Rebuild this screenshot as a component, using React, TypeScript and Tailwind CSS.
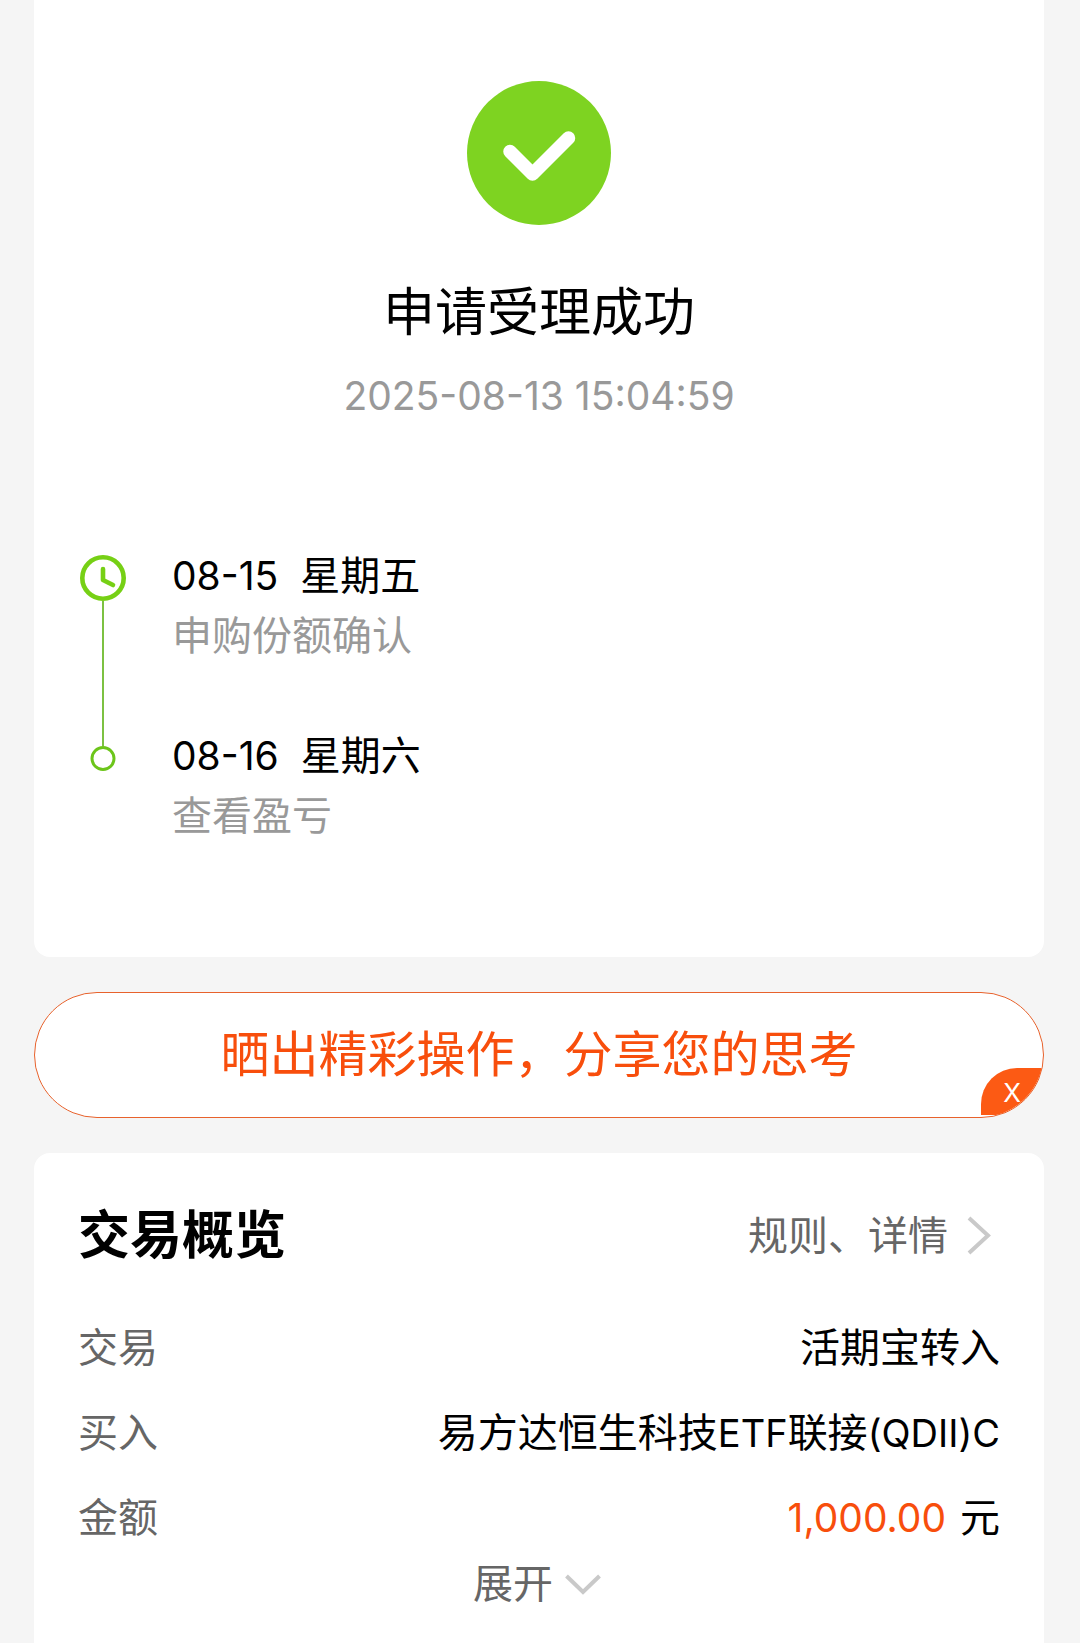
import React from 'react';

const steps = [
  { date: '08-15', weekday: '星期五', label: '申购份额确认' },
  { date: '08-16', weekday: '星期六', label: '查看盈亏' }
];

function SuccessIcon() {
  return (
    <svg className="h-36 w-36" viewBox="0 0 144 144" fill="none" aria-hidden="true">
      <circle cx="72" cy="72" r="72" fill="#7ed321" />
      <path
        d="M43 70.5 65.5 93 101.5 57"
        stroke="#fff"
        strokeWidth="13.5"
        strokeLinecap="round"
        strokeLinejoin="round"
      />
    </svg>
  );
}

function ClockIcon() {
  return (
    <svg className="h-[46px] w-[46px] shrink-0" viewBox="0 0 46 46" fill="none" stroke="#76d015" aria-hidden="true">
      <circle cx="23" cy="23" r="20.7" strokeWidth="4.6" />
      <path d="M23 14V25L33 30" strokeWidth="4.6" strokeLinecap="round" strokeLinejoin="round" />
    </svg>
  );
}

function DotIcon() {
  return (
    <svg className="h-[26px] w-[26px] shrink-0" viewBox="0 0 26 26" fill="none" aria-hidden="true">
      <circle cx="13" cy="12.5" r="11" stroke="#6cc51a" strokeWidth="3" />
    </svg>
  );
}

export default function App() {
  return (
    <main className="flex min-h-screen flex-col bg-[#f5f5f5] pr-9 pl-[34px] font-['Inter','Noto_Sans_CJK_SC',sans-serif] text-[40px] leading-[60px] text-black">
      {/* Result */}
      <section className="rounded-b-2xl bg-white px-[46px] pt-[81px] pb-[111px]">
        <div className="flex flex-col items-center">
          <SuccessIcon />
          <h1 className="mt-[53px] text-[52px] leading-[70px]">申请受理成功</h1>
          <time className="mt-[18px] text-[39px] text-[#999]">2025-08-13 15:04:59</time>
        </div>

        <ol className="mt-[120px]">
          {steps.map((step, index) => (
            <li key={step.date} className="flex gap-[46px]">
              <div className="flex w-[46px] flex-col items-center">
                {index === 0 ? (
                  <>
                    <div className="h-[9px]" />
                    <ClockIcon />
                    <div className="w-[2px] flex-1 bg-[#7cc142]" />
                  </>
                ) : (
                  <>
                    <div className="h-5 w-[2px] bg-[#7cc142]" />
                    <DotIcon />
                  </>
                )}
              </div>
              <div className={index === 0 ? 'pb-[60px]' : ''}>
                <p className="flex gap-[22px]">
                  <span className="text-[39px]">{step.date}</span>
                  <span>{step.weekday}</span>
                </p>
                <p className="text-[#999]">{step.label}</p>
              </div>
            </li>
          ))}
        </ol>
      </section>

      {/* Share banner */}
      <div className="relative my-[35px] overflow-hidden rounded-full border border-[#e8622c] bg-white">
        <button type="button" className="block w-full py-[27px] text-center text-[49px] leading-[70px] text-[#f84e0c]">
          晒出精彩操作，分享您的思考
        </button>
        <button
          type="button"
          aria-label="关闭"
          className="absolute right-0 bottom-[2px] h-[47px] w-[62px] rounded-tl-[36px] bg-[#fc5a14] text-[26px] leading-[50px] text-white"
        >
          X
        </button>
      </div>

      {/* Overview */}
      <section className="flex-1 rounded-t-2xl bg-white px-11 pt-12 pb-[30px]">
        <div className="flex items-center justify-between">
          <h2 className="text-[52px] leading-[70px] font-bold">交易概览</h2>
          <a href="#rules" className="flex items-center gap-3 text-[#666]">
            规则、详情
            <svg className="h-10 w-10" viewBox="0 0 40 40" fill="none" aria-hidden="true">
              <path d="M9 2 28 19.5 9 37" stroke="#c9c9c9" strokeWidth="4" />
            </svg>
          </a>
        </div>

        <dl className="mt-[47px] flex flex-col gap-[25px]">
          <div className="flex justify-between">
            <dt className="text-[#666]">交易</dt>
            <dd>活期宝转入</dd>
          </div>
          <div className="flex justify-between">
            <dt className="text-[#666]">买入</dt>
            <dd>
              易方达恒生科技<span className="text-[38px]">ETF</span>联接<span className="text-[38px]">(QDII)C</span>
            </dd>
          </div>
          <div className="flex justify-between">
            <dt className="text-[#666]">金额</dt>
            <dd className="flex gap-[14px]">
              <span className="text-[39px] text-[#f84e0c]">1,000.00</span>
              <span>元</span>
            </dd>
          </div>
        </dl>

        <button type="button" className="mx-auto mt-[6px] flex items-center gap-3 pr-1 text-[#666]">
          展开
          <svg className="h-9 w-9" viewBox="0 0 36 36" fill="none" aria-hidden="true">
            <path d="M1.5 10 18 26 34.5 10" stroke="#c9c9c9" strokeWidth="4" />
          </svg>
        </button>
      </section>
    </main>
  );
}
